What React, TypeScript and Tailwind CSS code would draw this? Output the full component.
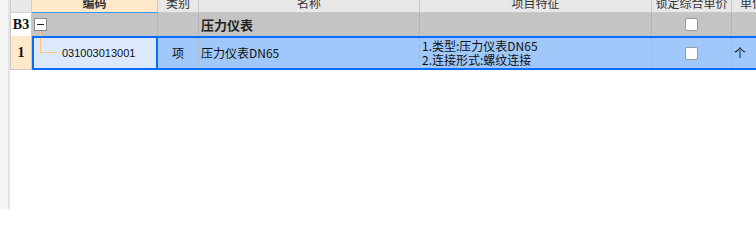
const cjk = "font-['Noto_Sans_CJK_SC',sans-serif]";

const Checkbox = () => (
  <div className="w-[13px] h-[13px] bg-white border border-[#9a9a9a] rounded-[2px]" />
);

export default function App() {
  return (
    <div className={`flex w-[756px] h-[209px] overflow-hidden bg-white text-[#111] ${cjk}`}>
      {/* left gutter */}
      <div className="w-[10px] shrink-0 flex">
        <div className="w-[8px] bg-[#f4f4f4]" />
        <div className="w-[2px] bg-[#e4e4e4]" />
      </div>

      <div className="flex flex-col -mt-[7px] shrink-0">
        {/* header */}
        <div className="flex h-[20px] text-[12px] leading-[19px] text-[#333]">
          <div className="w-[22px] shrink-0 bg-[#e8e8e8] border-l border-r border-b border-[#cfcfcf]" />
          <div className="w-[126px] shrink-0 bg-[#fde8c9] border-r border-[#c8c8c8] border-b border-b-[#3399ff] text-center font-bold">
            编码
          </div>
          <div className="w-[41px] shrink-0 bg-[#e8e8e8] border-r border-b border-[#c8c8c8] text-center">类别</div>
          <div className="w-[221px] shrink-0 bg-[#e8e8e8] border-r border-b border-[#c8c8c8] text-center">名称</div>
          <div className="w-[232px] shrink-0 bg-[#e8e8e8] border-r border-b border-[#c8c8c8] text-center">项目特征</div>
          <div className="w-[80px] shrink-0 bg-[#e8e8e8] border-r border-b border-[#c8c8c8] text-center">锁定综合单价</div>
          <div className="w-[40px] shrink-0 bg-[#e8e8e8] border-b border-[#c8c8c8] text-center">单位</div>
        </div>

        {/* B3 group row */}
        <div className="flex h-[23px]">
          <div className="w-[22px] shrink-0 bg-white border-l border-r border-[#c8c8c8] flex items-center justify-center font-['Liberation_Serif',serif] font-bold text-[14px]">
            B3
          </div>
          <div className="relative w-[126px] shrink-0 bg-[#c4c4c4] border-r border-[#b4b4b4] flex items-center pl-[2px]">
            <div className="w-[13px] h-[13px] bg-white border border-[#8c8c8c] flex items-center justify-center">
              <div className="w-[7px] h-[1px] bg-[#222]" />
            </div>
            <span className="absolute left-[8px] top-[18px] w-[1px] h-[5px] bg-[#ffc37a]" />
          </div>
          <div className="w-[41px] shrink-0 bg-[#c4c4c4] border-r border-[#b4b4b4]" />
          <div className="w-[221px] shrink-0 bg-[#c4c4c4] border-r border-[#b4b4b4] pl-[2px] flex items-center text-[13px] font-bold text-[#222]">
            压力仪表
          </div>
          <div className="w-[232px] shrink-0 bg-[#c4c4c4] border-r border-[#b4b4b4]" />
          <div className="w-[80px] shrink-0 bg-[#c4c4c4] border-r border-[#b4b4b4] flex items-center justify-center">
            <Checkbox />
          </div>
          <div className="w-[40px] shrink-0 bg-[#c4c4c4]" />
        </div>

        {/* selected item row */}
        <div className="flex h-[34px]">
          <div className="w-[22px] shrink-0 bg-[#fde8c9] border-l border-r border-b border-[#c8c8c8] flex items-center justify-center font-['Liberation_Serif',serif] font-bold text-[14px]">
            1
          </div>
          <div className="flex border-y-2 border-l-2 border-[#0a6cff] bg-[#a0c8fa] text-[12px]">
            <div className="relative w-[124px] shrink-0 bg-[#dce9fd] border-r-2 border-[#0a6cff] flex items-center pl-[28px] font-['Liberation_Sans',sans-serif] text-[11px]">
              <span className="absolute left-[6px] top-0 w-[17px] h-[15px] border-l border-b border-[#ffc37a]" />
              031003013001
            </div>
            <div className="w-[41px] shrink-0 border-r border-[#b0bccc] flex items-center justify-center">项</div>
            <div className="w-[221px] shrink-0 border-r border-[#b0bccc] flex items-center pl-[2px]">压力仪表DN65</div>
            <div className="w-[232px] shrink-0 border-r border-[#b0bccc] flex flex-col justify-center pl-[2px] leading-[14px]">
              <div>1.类型:压力仪表DN65</div>
              <div>2.连接形式:螺纹连接</div>
            </div>
            <div className="w-[80px] shrink-0 border-r border-[#b0bccc] flex items-center justify-center">
              <Checkbox />
            </div>
            <div className="w-[38px] shrink-0 flex items-center pl-[2px]">个</div>
          </div>
        </div>
      </div>
    </div>
  );
}
